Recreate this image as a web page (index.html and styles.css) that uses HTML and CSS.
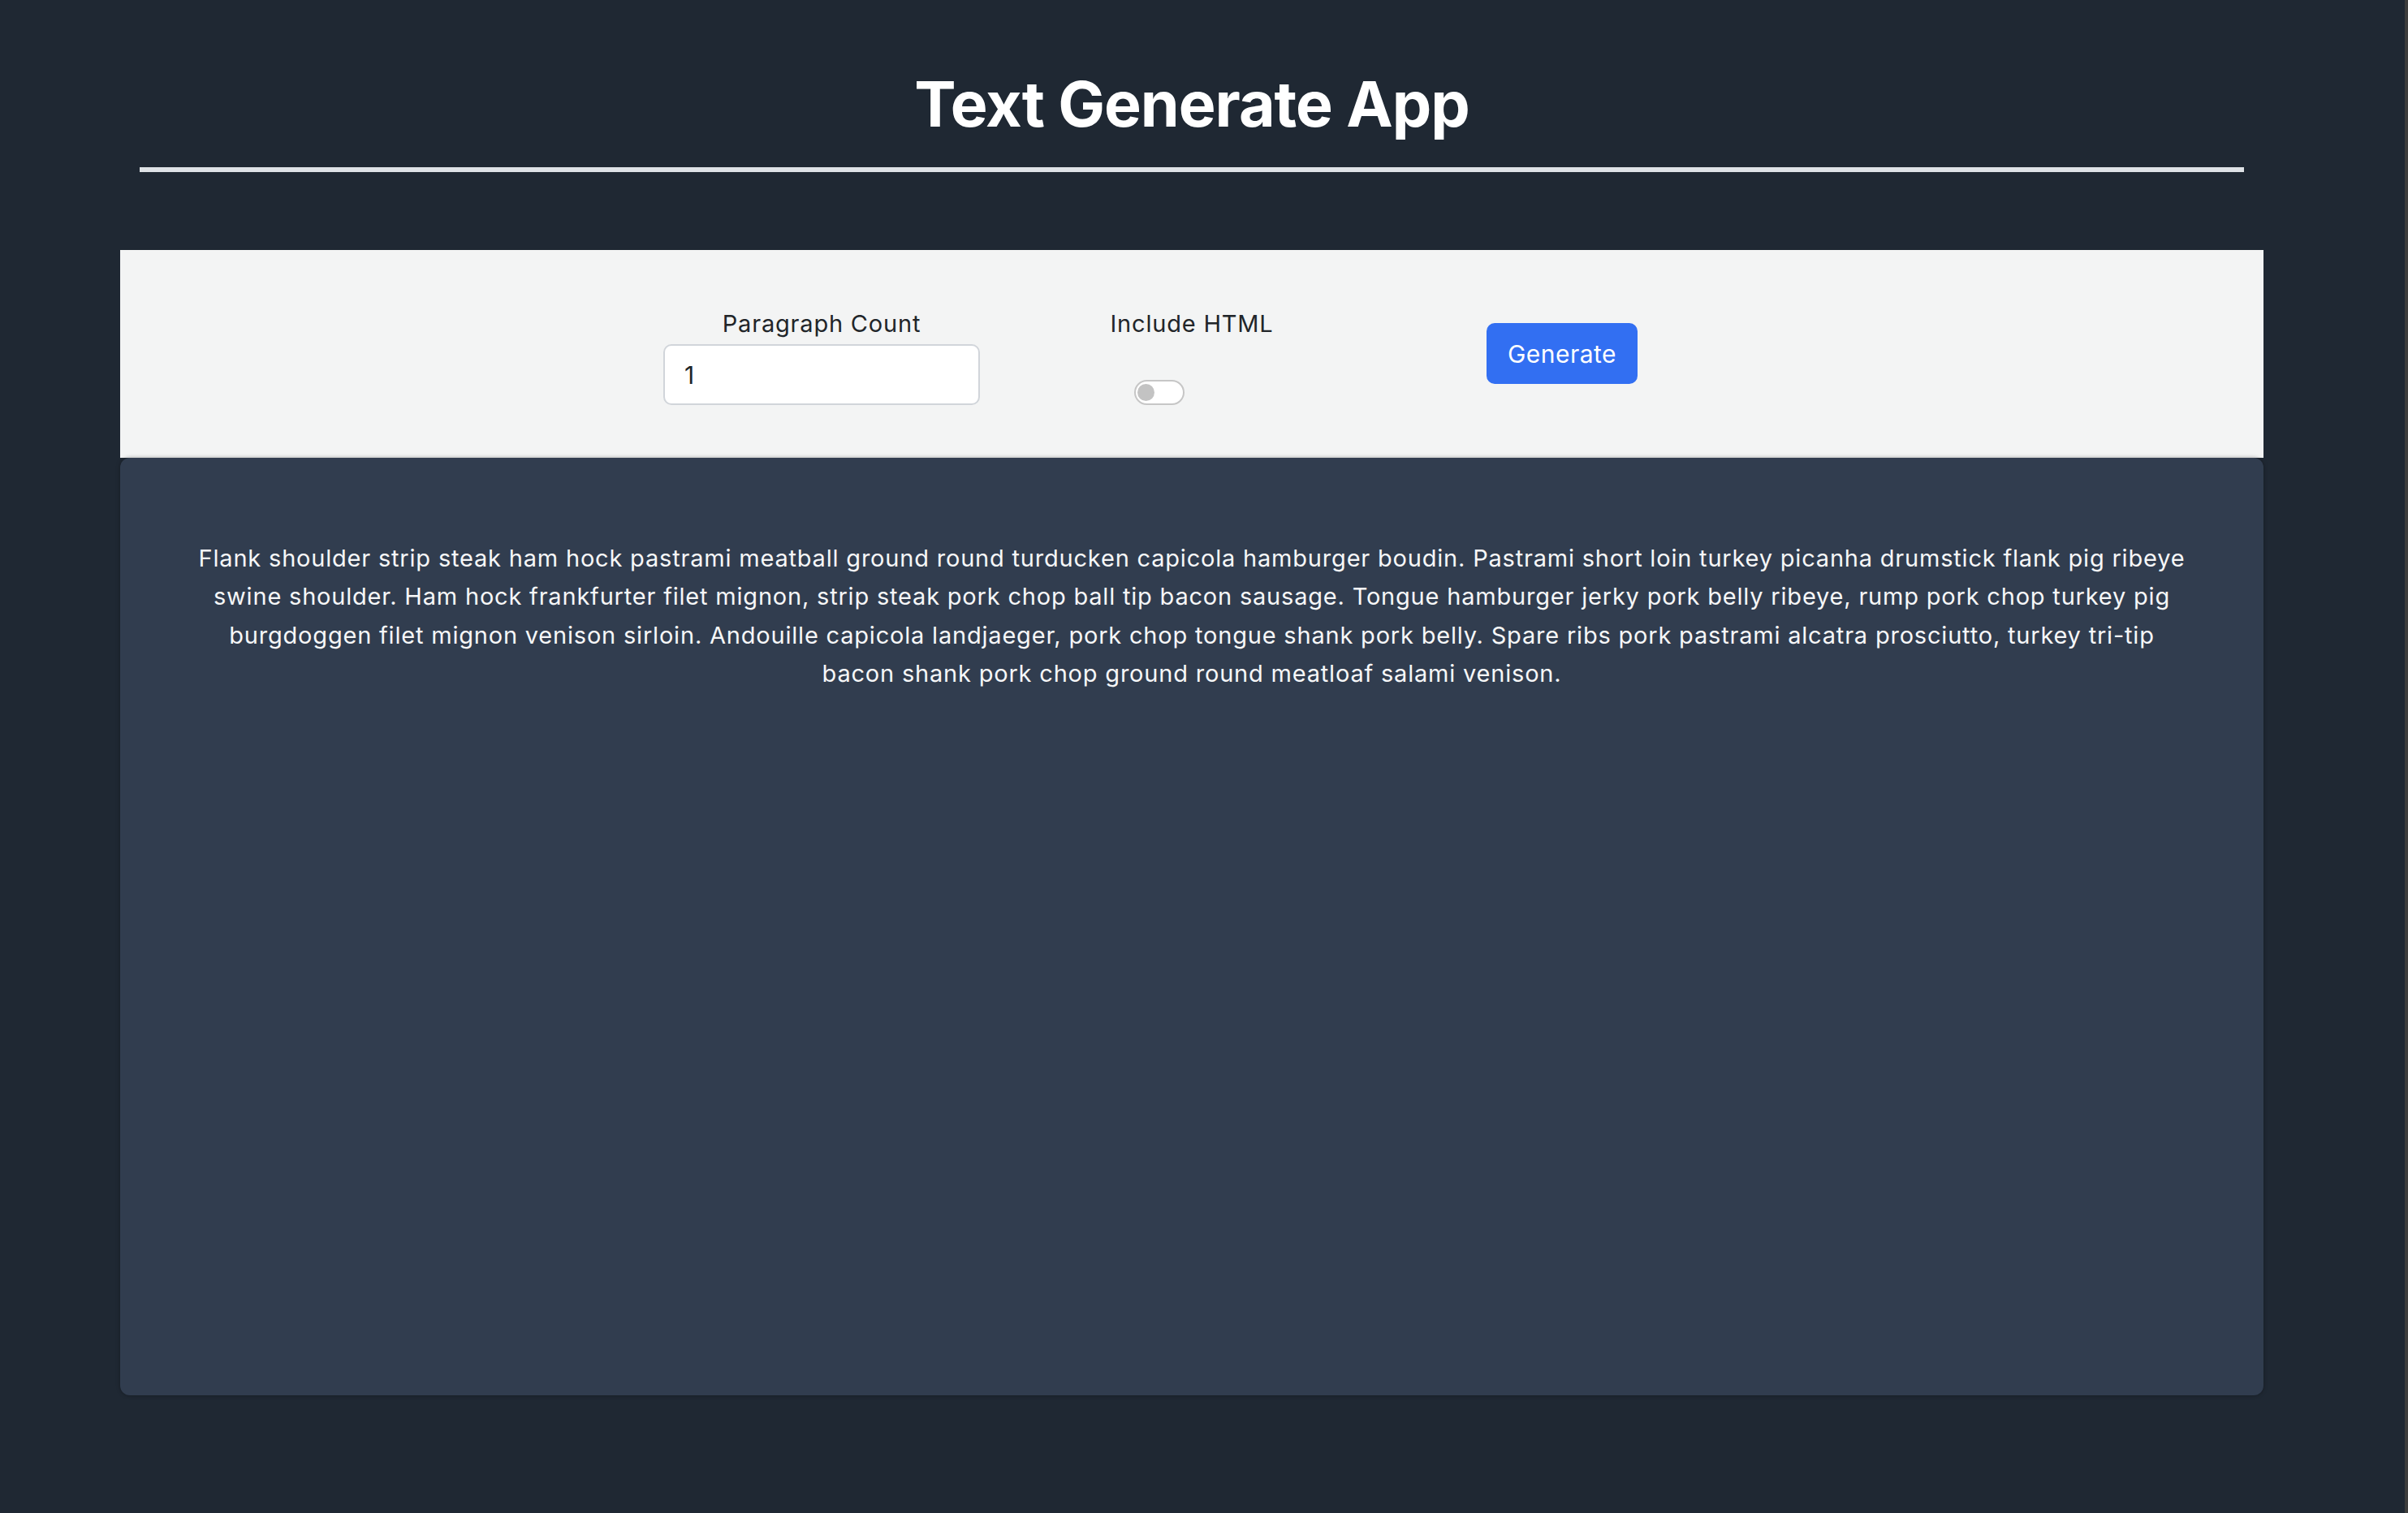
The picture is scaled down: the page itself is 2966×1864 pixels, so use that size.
FILE: index.html
```html
<!DOCTYPE html>
<html lang="en">
<head>
<meta charset="utf-8">
<title>Text Generate App</title>
<link rel="stylesheet" href="styles.css">
</head>
<body>
  <div class="page">
    <header class="header">
      <h1 class="title">Text Generate App</h1>
      <hr class="rule">
    </header>
    <form class="controls">
      <div class="field">
        <label class="field-label" for="count">Paragraph Count</label>
        <input class="count-input" id="count" type="number" value="1">
      </div>
      <div class="field">
        <span class="field-label">Include HTML</span>
        <span class="toggle"><span class="knob"></span></span>
      </div>
      <div class="field">
        <button class="generate" type="button">Generate</button>
      </div>
    </form>
    <section class="output">
      <p class="output-text">Flank shoulder strip steak ham hock pastrami meatball ground round turducken capicola hamburger boudin. Pastrami short loin turkey picanha drumstick flank pig ribeye<br>swine shoulder. Ham hock frankfurter filet mignon, strip steak pork chop ball tip bacon sausage. Tongue hamburger jerky pork belly ribeye, rump pork chop turkey pig<br>burgdoggen filet mignon venison sirloin. Andouille capicola landjaeger, pork chop tongue shank pork belly. Spare ribs pork pastrami alcatra prosciutto, turkey tri-tip<br>bacon shank pork chop ground round meatloaf salami venison.</p>
    </section>
  </div>
</body>
</html>
```
FILE: styles.css
```css
html, body {
  margin: 0;
  padding: 0;
}
body {
  width: 2966px;
  min-height: 1864px;
  box-sizing: border-box;
  background: #1f2833;
  border-right: 4px solid #3d3d3d;
  font-family: Inter, "Noto Sans", sans-serif;
  color: #212529;
}
.page {
  width: 2936px;
  box-sizing: border-box;
  padding: 82px 148px 0;
}
.header {
  text-align: center;
}
.title {
  margin: 0;
  font-size: 77px;
  line-height: 92px;
  font-weight: 700;
  color: #ffffff;
  letter-spacing: -1px;
}
.rule {
  margin: 32px 24px 0;
  height: 6px;
  border: none;
  background: #dee2e6;
}
.controls {
  margin: 96px 0 0;
  background: #f3f4f4;
  height: 256px;
  box-sizing: border-box;
  padding-top: 69px;
  display: grid;
  grid-template-columns: repeat(3, 456px);
  justify-content: center;
  align-items: start;
}
.field {
  display: flex;
  flex-direction: column;
  align-items: center;
}
.field-label {
  font-size: 29px;
  line-height: 43px;
  margin-bottom: 4px;
  letter-spacing: 0.8px;
  color: #212529;
}
.count-input {
  width: 390px;
  height: 75px;
  box-sizing: border-box;
  border: 2px solid #d1d5da;
  border-radius: 10px;
  background: #ffffff;
  padding: 0 24px;
  font-family: Inter, "Noto Sans", sans-serif;
  font-size: 30px;
  color: #212529;
  outline: none;
  -moz-appearance: textfield;
}
.count-input::-webkit-inner-spin-button,
.count-input::-webkit-outer-spin-button {
  -webkit-appearance: none;
  margin: 0;
}
.toggle {
  display: flex;
  align-items: center;
  width: 62px;
  height: 31px;
  box-sizing: border-box;
  border: 2px solid #c6c6c6;
  border-radius: 16px;
  background: #ffffff;
  margin-top: 44px;
  margin-right: 80px;
  padding-left: 2px;
}
.knob {
  width: 21px;
  height: 21px;
  border-radius: 50%;
  background: #c3c3c3;
}
.generate {
  margin-top: 21px;
  width: 186px;
  height: 75px;
  border: none;
  border-radius: 10px;
  background: #326ff2;
  color: #ffffff;
  font-family: Inter, "Noto Sans", sans-serif;
  font-size: 30px;
  letter-spacing: 0.5px;
  padding: 0;
}
.output {
  height: 1155px;
  box-sizing: border-box;
  background: #313d4f;
  border-radius: 12px;
  box-shadow: 0 0 5px rgba(0, 0, 0, 0.35);
  padding: 100px 60px 0;
}
.output-text {
  margin: 0;
  text-align: center;
  font-size: 29px;
  line-height: 47.3px;
  letter-spacing: 0.8px;
  color: #f6f7f8;
}
```
